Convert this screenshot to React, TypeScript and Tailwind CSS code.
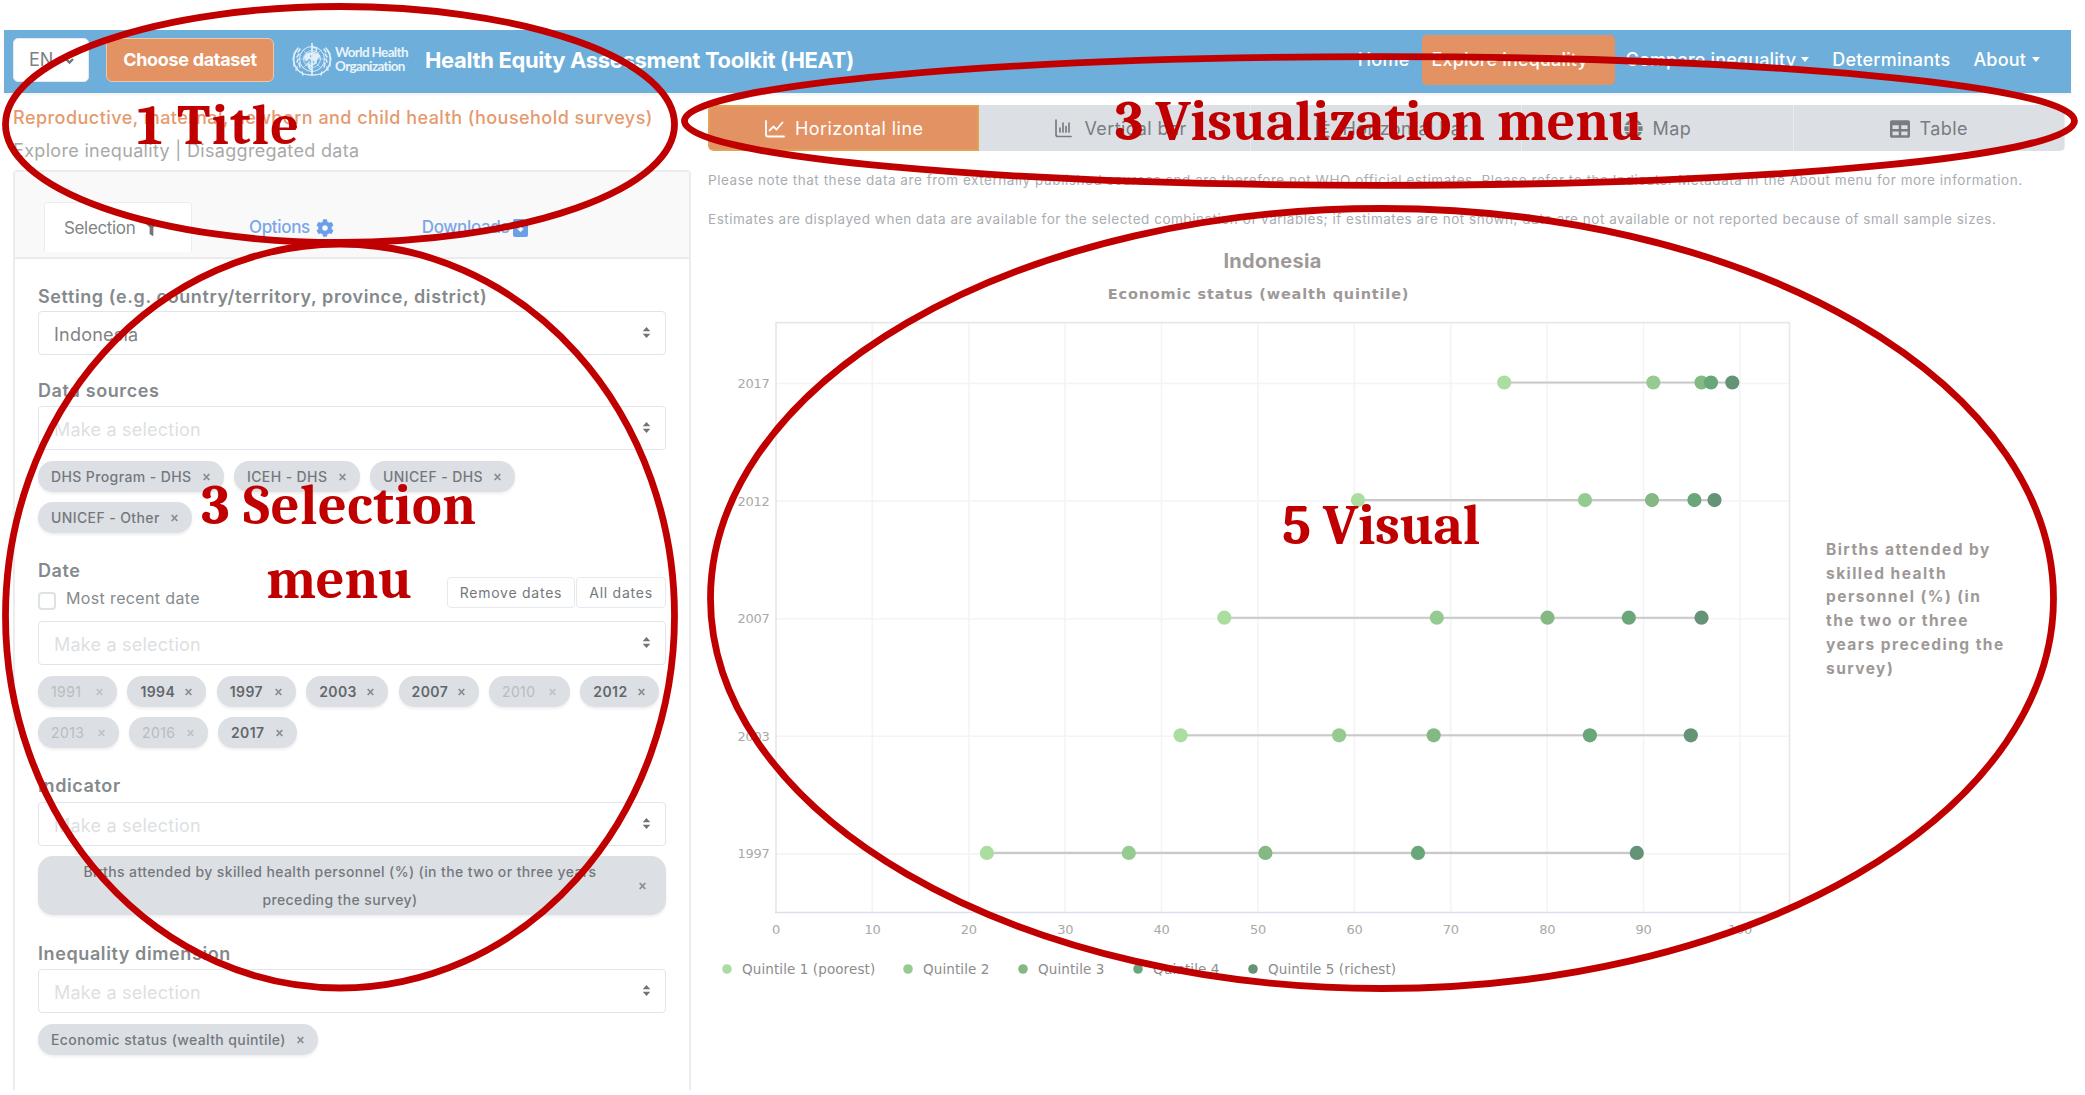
import React from 'react';
import { FaFilter, FaCog, FaTable, FaGlobe } from 'react-icons/fa';

const QUINTILE_COLORS = ['#abdda1', '#95cb90', '#84b983', '#69a77a', '#649377'];

const SERIES = [
  { year: '2017', y: 383, values: [1504.2, 1653.3, 1701.5, 1711, 1732.3] },
  { year: '2012', y: 500.6, values: [1358, 1585, 1652, 1694.4, 1714.5] },
  { year: '2007', y: 618.2, values: [1224.3, 1436.8, 1547.5, 1628.8, 1701.5] },
  { year: '2003', y: 735.8, values: [1180.6, 1339.1, 1433.7, 1589.9, 1690.8] },
  { year: '1997', y: 853.4, values: [986.9, 1128.8, 1265.4, 1418, 1636.8] },
];

const LEGEND = [
  { label: 'Quintile 1 (poorest)', width: 'w-[181px]' },
  { label: 'Quintile 2', width: 'w-[115px]' },
  { label: 'Quintile 3', width: 'w-[115px]' },
  { label: 'Quintile 4', width: 'w-[115px]' },
  { label: 'Quintile 5 (richest)', width: 'w-[160px]' },
];

function Emblem() {
  return (
    <svg width="42" height="36" viewBox="0 0 42 36" fill="none" stroke="#e0eff9" strokeLinecap="round">
      <circle cx="21" cy="17" r="12.5" strokeWidth="1" />
      <circle cx="21" cy="17" r="8.5" strokeWidth=".8" />
      <circle cx="21" cy="17" r="4.5" strokeWidth=".7" />
      <path d="M8.5 17h25M12 8l18 18M30 8L12 26" strokeWidth=".6" />
      <path d="M13 15c2-4 5-5 7-4l-2 5-3 3zM22 12c4-2 7 0 7 3l-3 2-1 4-3-3zM16 21l3 1-1 3z" fill="#e0eff9" strokeWidth=".6" />
      <path d="M21 1.5v31" strokeWidth="1.7" />
      <path d="M21 6c5-2 7 3 1 5s-6 4-1 6 5 4 0 6-3 4 0 5" strokeWidth="1.5" />
      <path d="M7 6C1 13 1 24 9 30c4 3 8 3 12 3M35 6c6 7 6 18-2 24-4 3-8 3-12 3" strokeWidth="1.4" />
      <path d="M5 9l-2 3M3 14l-1 4M3 20l0 4M6 25l-1 3M11 30l1 3M37 9l2 3M39 14l1 4M39 20l0 4M36 25l1 3M31 30l-1 3M7 10l2-3M6 15l2-3M6 20l1-3M9 25l-1-4M35 10l-2-3M36 15l-2-3M36 20l-1-3M33 25l1-4" strokeWidth="1.5" />
    </svg>
  );
}

function Caret() {
  return <span className="h-0 w-0 border-x-[4.5px] border-t-[5px] border-x-transparent border-t-white" />;
}

function Navbar() {
  return (
    <header className="ml-1 flex h-[63px] w-[2067px] items-center bg-[#6eaeda] text-white shadow-[0_2px_3px_rgba(0,0,0,0.06)]">
      <div className="mt-[-4px] ml-[9px] flex h-[44px] w-[76px] shrink-0 items-center justify-between rounded-[5px] border border-[#e4eaef] bg-white pr-[14px] pl-[15px] text-[18px] text-[#7c8186]">
        <span>EN</span>
        <svg width="9" height="8" viewBox="0 0 9 8" fill="none" stroke="#6f7478" strokeWidth="2.4" className="mt-[3px]">
          <path d="M1 2l3.5 3.5L8 2" />
        </svg>
      </div>
      <button className="mt-[-4px] ml-[17px] h-[44px] w-[168px] shrink-0 rounded-[6px] border border-[#edc7a6] bg-[#e39263] text-[18px] font-bold tracking-[-0.32px]">
        Choose dataset
      </button>
      <div className="mt-[-4px] ml-[17px] flex w-[134px] shrink-0 items-center">
        <Emblem />
        <div className="ml-[2px] font-['Lato'] text-[13.5px] leading-[13.5px] font-bold tracking-[-0.65px] whitespace-nowrap text-[#e9f4fb]">
          World Health
          <br />
          Organization
        </div>
      </div>
      <h1 className="mt-[-3px] w-[430px] shrink-0 text-[22px] font-bold tracking-[-0.34px] whitespace-nowrap">
        Health Equity Assessment Toolkit (HEAT)
      </h1>
      <nav className="mt-[-4px] ml-auto flex items-center text-[18px] font-medium tracking-[0.17px] whitespace-nowrap">
        <a className="mr-[12px] tracking-[0.25px]">Home</a>
        <a className="mr-[11px] flex h-[50px] w-[193px] items-center justify-between rounded-[5px] bg-[#e39263] pr-[14px] pl-[10px]">
          Explore inequality
          <Caret />
        </a>
        <a className="mr-[23px] flex items-center gap-[5px]">
          Compare inequality
          <Caret />
        </a>
        <a className="mr-[23px] tracking-[0.24px]">Determinants</a>
        <a className="mr-[31px] flex items-center gap-[6px]">
          About
          <Caret />
        </a>
      </nav>
    </header>
  );
}

function SelectBox({ value }: { value?: string }) {
  return (
    <div className="flex h-[44px] w-[628px] items-center justify-between rounded-[4px] border-[1.5px] border-[#e1e5e9] bg-white pr-[14px] pl-[15px] text-[18px] tracking-[0.22px]">
      <span className={value ? 'mt-[2px] text-[#7f8487]' : 'mt-[2px] text-[#dcdfe3]'}>{value ?? 'Make a selection'}</span>
      <svg width="9" height="13" viewBox="0 0 10 14" fill="#6f7478" className="mt-[-1px]">
        <path d="M5 1l4.2 4.6H.8zM5 13l4.2-4.6H.8z" />
      </svg>
    </div>
  );
}

function Cross({ faded = false }: { faded?: boolean }) {
  return (
    <svg width="7" height="8" viewBox="0 0 7 8" fill="none" strokeWidth="1.8" className={faded ? 'mt-px shrink-0 stroke-[#bfc2c5]' : 'mt-px shrink-0 stroke-[#8a8e92]'}>
      <path d="M.7 1l5.600 6M6.300 1L.7 7" />
    </svg>
  );
}

function Pill({ label, width, tone = 'normal' }: { label: string; width: string; tone?: 'normal' | 'strong' | 'faded' }) {
  const tones = {
    normal: 'font-medium text-[#74787c]',
    strong: 'font-semibold text-[#63676b]',
    faded: 'text-[#b9bcbf]',
  };
  return (
    <span
      className={`flex h-[31px] shrink-0 items-center justify-between rounded-[15px] bg-[#dce0e5] pr-[14px] pl-[13px] text-[14px] tracking-[0.39px] whitespace-nowrap shadow-[0_2px_3px_rgba(0,0,0,0.07)] ${width} ${tones[tone]}`}
    >
      {label}
      <Cross faded={tone === 'faded'} />
    </span>
  );
}

function Label({ children }: { children: string }) {
  return <div className="h-[25px] text-[18px] leading-[26px] font-semibold tracking-[0.6px] text-[#84898c]">{children}</div>;
}

function Sidebar() {
  return (
    <aside className="h-[920px] w-[678px] shrink-0 rounded-t-[4px] border-x-2 border-t-2 border-[#ececee] bg-white">
      <div className="flex h-[87px] items-end border-b-2 border-[#ebebec] bg-[#f9f9f9] pb-[5px] pl-[29px] text-[17px] tracking-[-0.35px]">
        <div className="flex h-[50px] w-[148px] items-center rounded-t-[4px] border border-b-0 border-[#e9edf0] bg-white pt-[2px] pl-[19px] text-[#7f8487]">
          Selection
          <FaFilter className="ml-[9px] text-[15px] text-[#72777a]" />
        </div>
        <div className="ml-[57px] flex h-[50px] items-center pt-[2px] font-medium text-[#7ba6e8]">
          Options
          <FaCog className="ml-[6px] text-[18px] text-[#6ba0e8]" />
        </div>
        <div className="ml-[88px] flex h-[50px] items-center pt-[2px] font-medium text-[#7ba6e8]">
          Downloads
          <svg width="15" height="18" viewBox="0 0 15 18" className="ml-[4px]">
            <path d="M2 0h8l5 5v11a2 2 0 0 1-2 2H2a2 2 0 0 1-2-2V2a2 2 0 0 1 2-2z" fill="#6ba0e8" />
            <path d="M6.4 6h2.2v3.500h2.400L7.500 13 4 9.500h2.400z" fill="#fff" />
          </svg>
        </div>
      </div>
      <div className="flex flex-col pl-[23px]">
        <div className="mt-[25px]">
          <Label>Setting (e.g. country/territory, province, district)</Label>
        </div>
        <div className="mt-[2px]">
          <SelectBox value="Indonesia" />
        </div>
        <div className="mt-[23px]">
          <Label>Data sources</Label>
        </div>
        <div className="mt-[3px]">
          <SelectBox />
        </div>
        <div className="mt-[11px] flex w-[628px] flex-wrap gap-[10px]">
          <Pill label="DHS Program - DHS" width="w-[186px]" />
          <Pill label="ICEH - DHS" width="w-[126px]" />
          <Pill label="UNICEF - DHS" width="w-[145px]" />
          <Pill label="UNICEF - Other" width="w-[154px]" />
        </div>
        <div className="mt-[25px]">
          <Label>Date</Label>
        </div>
        <div className="mt-[-6px] flex h-[31px] w-[628px] items-start">
          <span className="mt-[15px] h-[18px] w-[18px] rounded-[4px] border-2 border-[#dde2e6] bg-white" />
          <span className="mt-[9px] ml-[10px] text-[16px] leading-6 tracking-[0.36px] text-[#868b8e]">Most recent date</span>
          <div className="ml-auto flex gap-px text-[14px] text-[#74797c]">
            <span className="flex h-[31px] w-[128px] items-center justify-center rounded-[4px] border-[1.5px] border-[#e6eaee] tracking-[0.75px]">
              Remove dates
            </span>
            <span className="flex h-[31px] w-[90px] items-center justify-center rounded-[4px] border-[1.5px] border-[#e6eaee] tracking-[0.75px]">
              All dates
            </span>
          </div>
        </div>
        <div className="mt-[13px]">
          <SelectBox />
        </div>
        <div className="mt-[11px] flex gap-[10.4px]">
          <Pill label="1991" width="w-[79px]" tone="faded" />
          <Pill label="1994" width="w-[79px]" tone="strong" />
          <Pill label="1997" width="w-[79px]" tone="strong" />
          <Pill label="2003" width="w-[82px]" tone="strong" />
          <Pill label="2007" width="w-[80px]" tone="strong" />
          <Pill label="2010" width="w-[81px]" tone="faded" />
          <Pill label="2012" width="w-[79px]" tone="strong" />
        </div>
        <div className="mt-[10px] flex gap-[10px]">
          <Pill label="2013" width="w-[81px]" tone="faded" />
          <Pill label="2016" width="w-[79px]" tone="faded" />
          <Pill label="2017" width="w-[79px]" tone="strong" />
        </div>
        <div className="mt-[25px]">
          <Label>Indicator</Label>
        </div>
        <div className="mt-[4px]">
          <SelectBox />
        </div>
        <div className="mt-[10px] flex h-[59px] w-[628px] items-center rounded-[15px] bg-[#dce0e5] pr-[20px] shadow-[0_2px_3px_rgba(0,0,0,0.07)]">
          <p className="flex-1 pl-[3px] text-center text-[14px] leading-[28px] font-medium tracking-[0.39px] text-[#74787c]">
            Births attended by skilled health personnel (%) (in the two or three years
            <br />
            preceding the survey)
          </p>
          <Cross />
        </div>
        <div className="mt-[26px]">
          <Label>Inequality dimension</Label>
        </div>
        <div className="mt-[3px]">
          <SelectBox />
        </div>
        <div className="mt-[11px] flex">
          <Pill label="Economic status (wealth quintile)" width="w-[280px]" />
        </div>
      </div>
    </aside>
  );
}

const TAB = 'flex items-center justify-center gap-[10px] border-r border-[#e9ecef] bg-[#dce0e5] pt-px text-[#787d81]';
const BAR_TAB = 'flex items-center justify-center gap-[12px] border-r border-[#e9ecef] bg-[#dce0e5] pt-px pl-[13px] text-[#787d81]';

function ViewTabs() {
  return (
    <div className="grid h-[46px] w-[1357px] grid-cols-5 overflow-hidden rounded-[5px] text-[18px] tracking-[0.42px]">
      <div className="flex items-center justify-center gap-[10px] rounded-l-[5px] border-2 border-[#e3a255] bg-[#e39263] pt-px pl-px text-white">
        <svg width="20" height="18" viewBox="0 0 20 18" fill="none" stroke="currentColor" strokeWidth="1.800" strokeLinecap="round" strokeLinejoin="round">
          <path d="M1 1v13.500q0 2 2 2h16M4.500 10.500l4-4 3 3 6-7" />
        </svg>
        Horizontal line
      </div>
      <div className={BAR_TAB}>
        <svg width="17" height="19" viewBox="0 0 17 19" fill="none" stroke="currentColor" strokeWidth="1.700" strokeLinecap="round">
          <path d="M1 1v14.500q0 2 2 2h13M5 9v4M8 4v9M11 7.500v5.500M14 4v9" />
        </svg>
        Vertical bar
      </div>
      <div className={BAR_TAB}>
        <svg width="14" height="19" viewBox="0 0 14 19" fill="none" stroke="currentColor" strokeWidth="1.700" strokeLinecap="round">
          <path d="M1 1v14.500q0 2 2 2h10M5 2.500h5M5 6h8M5 9.500h5M5 13h7" />
        </svg>
        Horizontal bar
      </div>
      <div className={TAB}>
        <FaGlobe className="text-[19px]" />
        Map
      </div>
      <div className={TAB}>
        <FaTable className="text-[20px]" />
        Table
      </div>
    </div>
  );
}

function Chart() {
  return (
    <svg width="1080" height="650" viewBox="708 304 1080 650" className="shrink-0 overflow-visible">
      <g stroke="#f4f4f5" strokeWidth="1.600">
        {Array.from({ length: 10 }, (_, i) => (
          <line key={i} x1={872.3 + i * 96.4} x2={872.3 + i * 96.4} y1="323" y2="912" />
        ))}
        {SERIES.map((s) => (
          <line key={s.year} x1="776" x2="1789" y1={s.y + 0.5} y2={s.y + 0.5} />
        ))}
      </g>
      <path d="M776 912V322.700H1789.500V912" fill="none" stroke="#e8e8e9" strokeWidth="1.700" />
      <path d="M775 912.500H1790" stroke="#dbe0ec" strokeWidth="1.500" />
      {SERIES.map((s) => (
        <g key={s.year}>
          <line x1={s.values[0]} x2={s.values[4]} y1={s.y - 0.5} y2={s.y - 0.5} stroke="#c9c9c9" strokeWidth="2.100" />
          {s.values.map((x, i) => (
            <circle key={i} cx={x} cy={s.y - 0.5} r="7.100" fill={QUINTILE_COLORS[i]} />
          ))}
          <text x="769.500" y={s.y + 5} textAnchor="end" className="fill-[#a9a9a9] font-['DejaVu_Sans'] text-[13px] tracking-[-0.300px]">
            {s.year}
          </text>
        </g>
      ))}
      {Array.from({ length: 11 }, (_, i) => (
        <text key={i} x={776 + i * 96.4} y="933.500" textAnchor="middle" className="fill-[#a9a9a9] font-['DejaVu_Sans'] text-[13px] tracking-[-0.300px]">
          {i * 10}
        </text>
      ))}
    </svg>
  );
}

function Content() {
  return (
    <main className="flex flex-col">
      <ViewTabs />
      <p className="mt-[17px] text-[13.500px] leading-6 tracking-[0.540px] whitespace-nowrap text-[#a9adb2]">
        Please note that these data are from externally published sources and are therefore not WHO official estimates. Please refer to the
        Indicator Metadata in the About menu for more information.
      </p>
      <p className="mt-[15px] text-[13.500px] leading-6 tracking-[0.520px] whitespace-nowrap text-[#a9adb2]">
        Estimates are displayed when data are available for the selected combination of variables; if estimates are not shown, data are not
        available or not reported because of small sample sizes.
      </p>
      <div className="mt-[17px] w-[1129px] text-center text-[#9e9997]">
        <h2 className="text-[20px] leading-[26px] font-bold tracking-[0.300px]">Indonesia</h2>
        <h3 className="mt-[9px] mr-[28px] mb-[-1px] font-['DejaVu_Sans'] text-[14.500px] leading-[22px] font-bold tracking-[0.800px]">
          Economic status (wealth quintile)
        </h3>
      </div>
      <div className="flex">
        <Chart />
        <div className="mt-[234px] ml-[38px] w-[200px] text-[15.500px] leading-[23.700px] font-bold tracking-[1.450px] whitespace-nowrap text-[#9e9997]">
          Births attended by
          <br />
          skilled health
          <br />
          personnel (%) (in
          <br />
          the two or three
          <br />
          years preceding the
          <br />
          survey)
        </div>
      </div>
      <div className="mt-[6px] ml-[14px] flex h-[18px] items-center font-['DejaVu_Sans'] text-[13.500px] tracking-[0.100px] whitespace-nowrap text-[#8c8c8c]">
        {LEGEND.map((item, i) => (
          <div key={item.label} className={`flex items-center gap-[10px] ${item.width}`}>
            <svg width="10" height="10" viewBox="0 0 10 10">
              <circle cx="5" cy="5" r="4.800" fill={QUINTILE_COLORS[i]} />
            </svg>
            {item.label}
          </div>
        ))}
      </div>
    </main>
  );
}

function Annotations() {
  return (
    <div className="pointer-events-none absolute inset-0 font-['Caladea',serif] text-[56px] leading-[76px] font-bold tracking-[-0.180px] whitespace-nowrap text-[#c00000]">
      <svg width="2085" height="1095" viewBox="0 0 2085 1095" fill="none" stroke="#c00000" strokeWidth="6.800" className="absolute inset-0">
        <ellipse cx="340" cy="124.500" rx="334.500" ry="118" />
        <ellipse cx="340" cy="616" rx="334.500" ry="372" />
        <ellipse cx="1379.500" cy="121" rx="695" ry="64.300" />
        <ellipse cx="1382" cy="598.500" rx="671.500" ry="390" />
      </svg>
      <div className="absolute top-[88px] left-[137px] tracking-[1.200px]">1 Title</div>
      <div className="absolute top-[84px] left-[1115px]">3 Visualization menu</div>
      <div className="absolute top-[468px] left-[200px] w-[278px] text-center tracking-[0.600px]">3 Selection</div>
      <div className="absolute top-[542px] left-[200px] w-[278px] text-center">menu</div>
      <div className="absolute top-[488px] left-[1282px]">5 Visual</div>
    </div>
  );
}

export default function App() {
  return (
    <div className="relative h-[1095px] w-[2085px] overflow-hidden bg-white pt-[30px] font-['Inter',sans-serif]">
      <Navbar />
      <div className="flex">
        <div className="ml-[13px] w-[678px] shrink-0">
          <div className="mt-[12px] text-[18px] leading-[26px] font-medium tracking-[0.460px] whitespace-nowrap text-[#e59a6e]">
            Reproductive, maternal, newborn and child health (household surveys)
          </div>
          <div className="mt-[7px] mb-[6px] text-[18px] leading-[26px] tracking-[0.320px] whitespace-nowrap text-[#a9a9a9]">
            Explore inequality | Disaggregated data
          </div>
          <Sidebar />
        </div>
        <div className="ml-[17px] pt-[12px]">
          <Content />
        </div>
      </div>
      <Annotations />
    </div>
  );
}
